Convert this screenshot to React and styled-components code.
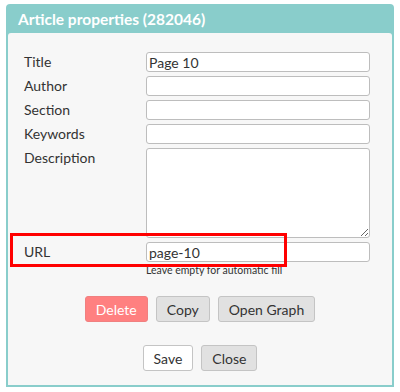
import React from "react";
import styled, { createGlobalStyle } from "styled-components";

const Global = createGlobalStyle`
  html, body { margin: 0; padding: 0; background: #ffffff; }
  body { font-family: "Lato", "Noto Sans", sans-serif; color: #333; }
  * { box-sizing: border-box; }
`;

const Page = styled.div`
  width: 400px;
  height: 392px;
  padding: 4px 6px 0 6px;
  overflow: hidden;
`;

const Dialog = styled.div`
  width: 388px;
  height: 383px;
  background: #89cdcb;
  border-radius: 4px 4px 0 0;
  padding: 0 2px 2px 2px;
  display: flex;
  flex-direction: column;
`;

const Header = styled.div`
  height: 29px;
  padding-left: 10px;
  display: flex;
  align-items: center;
  color: #fff;
  font-weight: 700;
  font-size: 15.5px;
`;

const Body = styled.div`
  position: relative;
  flex: 1;
  background: #f7f7f7;
  border-radius: 3px 3px 0 0;
  padding: 19px 0 13px 16px;
  display: flex;
  flex-direction: column;
`;

const Form = styled.div`
  display: grid;
  grid-template-columns: 122px 224px;
  row-gap: 4px;
  align-items: start;
`;

const Label = styled.label`
  font-size: 14px;
  line-height: 19px;
  color: #333;
`;

const Input = styled.input`
  height: 20px;
  width: 224px;
  border: 1px solid #bdbdbd;
  border-radius: 3px;
  background: #fff;
  padding: 0 2px;
  font-family: inherit;
  font-size: 14px;
  color: #333;
  outline: none;
`;

const TextArea = styled.textarea`
  height: 90px;
  width: 224px;
  border: 1px solid #bdbdbd;
  border-radius: 3px;
  background: #fff;
  padding: 2px;
  font-family: inherit;
  font-size: 14px;
  display: block;
  outline: none;
`;

const Hint = styled.div`
  grid-column: 2;
  margin-top: -3px;
  font-size: 10.5px;
  line-height: 14px;
  color: #333;
`;

const Highlight = styled.div`
  position: absolute;
  left: 2px;
  top: 200px;
  width: 277px;
  height: 34px;
  border: 3px solid #ff0000;
  pointer-events: none;
`;

const ButtonRow = styled.div`
  display: flex;
  justify-content: center;
  gap: 8px;
  margin-left: -16px;
  margin-top: ${(p) => p.$mt}px;
`;

const Button = styled.button`
  height: 26px;
  padding: 0 10px;
  border: 1px solid ${(p) => (p.$variant === "danger" ? "#f08080" : "#c4c4c4")};
  border-radius: 3px;
  background: ${(p) =>
    p.$variant === "danger" ? "#ff8080" : p.$variant === "light" ? "#ffffff" : "#e1e1e1"};
  color: ${(p) => (p.$variant === "danger" ? "#fff" : "#333")};
  font-family: inherit;
  font-size: 14px;
  cursor: pointer;
`;

export default function App() {
  return (
    <>
      <Global />
      <Page>
        <Dialog>
          <Header>Article properties (282046)</Header>
          <Body>
            <Form>
              <Label>Title</Label>
              <Input defaultValue="Page 10" />
              <Label>Author</Label>
              <Input />
              <Label>Section</Label>
              <Input />
              <Label>Keywords</Label>
              <Input />
              <Label>Description</Label>
              <TextArea />
              <Label>URL</Label>
              <Input defaultValue="page-10" />
              <Hint>Leave empty for automatic fill</Hint>
            </Form>
            <Highlight />
            <ButtonRow $mt={19}>
              <Button $variant="danger">Delete</Button>
              <Button>Copy</Button>
              <Button>Open Graph</Button>
            </ButtonRow>
            <ButtonRow $mt={23}>
              <Button $variant="light">Save</Button>
              <Button>Close</Button>
            </ButtonRow>
          </Body>
        </Dialog>
      </Page>
    </>
  );
}
